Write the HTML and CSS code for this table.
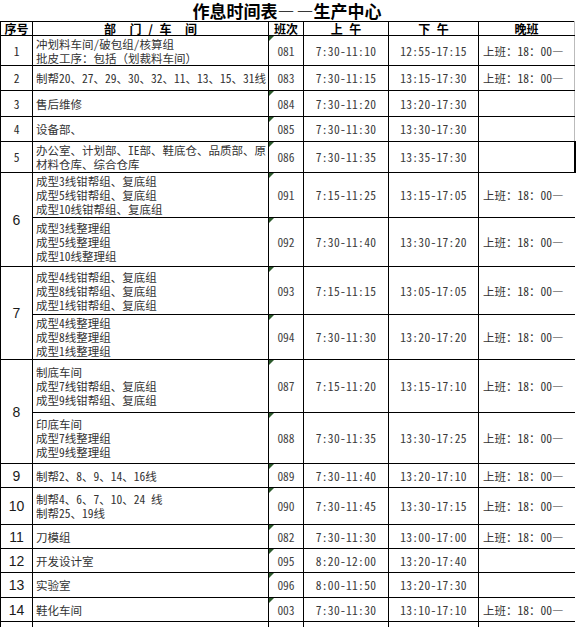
FILE: index.html
```html
<!DOCTYPE html>
<html lang="zh-CN">
<head>
<meta charset="utf-8">
<title>作息时间表——生产中心</title>
<link rel="stylesheet" href="styles.css">
</head>
<body>
<div class="sheet">
  <div class="title">作息时间表<span class="dash">—</span>—生产中心</div>
  <table class="sched">
    <colgroup>
      <col class="c-no"><col class="c-dept"><col class="c-code"><col class="c-am"><col class="c-pm"><col class="c-night">
    </colgroup>
    <thead>
      <tr class="r-head"><th>序号</th><th class="wide">部  门 / 车  间</th><th>班次</th><th class="wide">上 午</th><th class="wide">下 午</th><th class="night-h">晚班</th></tr>
    </thead>
    <tbody>
      <tr class="r30"><td class="no">1</td><td class="dept">冲划料车间/破包组/核算组<br>批皮工序：包括（划裁料车间）</td><td class="code flag">081</td><td class="time">7:30-11:10</td><td class="time">12:55-17:15</td><td class="night edge">上班：18：00—</td></tr>
      <tr class="r25"><td class="no">2</td><td class="dept">制帮20、27、29、30、32、11、13、15、31线</td><td class="code">083</td><td class="time">7:30-11:15</td><td class="time">13:15-17:30</td><td class="night edge">上班：18：00—</td></tr>
      <tr class="r26"><td class="no">3</td><td class="dept">售后维修</td><td class="code flag">084</td><td class="time">7:30-11:20</td><td class="time">13:20-17:30</td><td class="night edge"></td></tr>
      <tr class="r25"><td class="no">4</td><td class="dept">设备部、</td><td class="code flag">085</td><td class="time">7:30-11:30</td><td class="time">13:30-17:30</td><td class="night edge"></td></tr>
      <tr class="r31"><td class="no">5</td><td class="dept">办公室、计划部、IE部、鞋底仓、品质部、原<br>材料仓库、综合仓库</td><td class="code flag">086</td><td class="time">7:30-11:35</td><td class="time">13:35-17:30</td><td class="night mark"></td></tr>
      <tr class="r45"><td class="no big" rowspan="2">6</td><td class="dept">成型3线钳帮组、复底组<br>成型5线钳帮组、复底组<br>成型10线钳帮组、复底组</td><td class="code flag">091</td><td class="time">7:15-11:25</td><td class="time">13:15-17:05</td><td class="night">上班：18：00—</td></tr>
      <tr class="r49"><td class="dept">成型3线整理组<br>成型5线整理组<br>成型10线整理组</td><td class="code flag">092</td><td class="time">7:30-11:40</td><td class="time">13:30-17:20</td><td class="night">上班：18：00—</td></tr>
      <tr class="r48"><td class="no big" rowspan="2">7</td><td class="dept">成型4线钳帮组、复底组<br>成型8线钳帮组、复底组<br>成型1线钳帮组、复底组</td><td class="code flag">093</td><td class="time">7:15-11:15</td><td class="time">13:05-17:05</td><td class="night">上班：18：00—</td></tr>
      <tr class="r45"><td class="dept">成型4线整理组<br>成型8线整理组<br>成型1线整理组</td><td class="code flag">094</td><td class="time">7:30-11:30</td><td class="time">13:20-17:20</td><td class="night">上班：18：00—</td></tr>
      <tr class="r53"><td class="no big" rowspan="2">8</td><td class="dept">制底车间<br>成型7线钳帮组、复底组<br>成型9线钳帮组、复底组</td><td class="code flag">087</td><td class="time">7:15-11:20</td><td class="time">13:15-17:10</td><td class="night">上班：18：00—</td></tr>
      <tr class="r51"><td class="dept">印底车间<br>成型7线整理组<br>成型9线整理组</td><td class="code flag">088</td><td class="time">7:30-11:35</td><td class="time">13:30-17:25</td><td class="night">上班：18：00—</td></tr>
      <tr class="r24"><td class="no big">9</td><td class="dept">制帮2、8、9、14、16线</td><td class="code flag">089</td><td class="time">7:30-11:40</td><td class="time">13:20-17:10</td><td class="night">上班：18：00—</td></tr>
      <tr class="r37"><td class="no big">10</td><td class="dept">制帮4、6、7、10、24 线<br>制帮25、19线</td><td class="code flag">090</td><td class="time">7:30-11:45</td><td class="time">13:30-17:15</td><td class="night">上班：18：00—</td></tr>
      <tr class="r24"><td class="no big">11</td><td class="dept">刀模组</td><td class="code flag">082</td><td class="time">7:30-11:30</td><td class="time">13:00-17:00</td><td class="night">上班：18：00—</td></tr>
      <tr class="r24"><td class="no big">12</td><td class="dept">开发设计室</td><td class="code flag">095</td><td class="time">8:20-12:00</td><td class="time">13:20-17:40</td><td class="night"></td></tr>
      <tr class="r25"><td class="no big">13</td><td class="dept">实验室</td><td class="code flag">096</td><td class="time">8:00-11:50</td><td class="time">13:20-17:30</td><td class="night"></td></tr>
      <tr class="r24"><td class="no big">14</td><td class="dept">鞋化车间</td><td class="code flag">003</td><td class="time">7:30-11:30</td><td class="time">13:10-17:10</td><td class="night">上班：18：00—</td></tr>
      <tr class="r-tail"><td></td><td></td><td></td><td></td><td></td><td class="night"></td></tr>
    </tbody>
  </table>
</div>
</body>
</html>
```

FILE: styles.css
```css
html, body {
  margin: 0;
  padding: 0;
  background: #fff;
}

.sheet {
  width: 579px;
  font-family: "Noto Sans Mono CJK SC", "Noto Sans CJK SC", sans-serif;
  color: #2a2a2a;
}

.title {
  width: 574px;
  height: 21px;
  line-height: 21px;
  text-align: center;
  font-family: "Noto Sans CJK SC", sans-serif;
  font-weight: 700;
  font-size: 17px;
  color: #000;
}

.title .dash {
  letter-spacing: 2px;
}

.sched {
  border-collapse: collapse;
  table-layout: fixed;
  width: 574px;
  font-size: 11.5px;
  line-height: 14px;
}

.c-no { width: 32px; }
.c-dept { width: 236px; }
.c-code { width: 35px; }
.c-am { width: 85px; }
.c-pm { width: 90px; }
.c-night { width: 96px; }

.sched th,
.sched td {
  border: 1px solid #000;
  padding: 0;
  vertical-align: middle;
  white-space: nowrap;
  overflow: hidden;
}

.sched th {
  font-family: "Noto Sans CJK SC", sans-serif;
  font-weight: 700;
  font-size: 12px;
  line-height: 13px;
  color: #000;
  text-align: center;
}

.sched th.wide {
  white-space: pre;
  word-spacing: 4px;
}

.sched th.night-h {
  border-right-color: #bbb;
}

.r-head { height: 14px; }
.r24 { height: 24px; }
.r25 { height: 25px; }
.r26 { height: 26px; }
.r30 { height: 30px; }
.r31 { height: 31px; }
.r37 { height: 37px; }
.r45 { height: 45px; }
.r48 { height: 48px; }
.r49 { height: 49px; }
.r51 { height: 51px; }
.r53 { height: 53px; }
.r-tail { height: 6px; }

.r-tail td {
  border-bottom: none;
}

.no {
  text-align: center;
}

.no.big {
  font-family: "Liberation Sans", sans-serif;
  font-size: 14px;
  color: #1a1a1a;
}

.dept {
  text-align: left;
  padding-left: 3px !important;
  color: #333;
}

.code {
  text-align: center;
  position: relative;
  color: #444;
}

.flag::before {
  content: "";
  position: absolute;
  left: 0;
  top: 0;
  width: 0;
  height: 0;
  border-top: 5px solid #2c5a2c;
  border-right: 5px solid transparent;
}

.time {
  text-align: center;
  letter-spacing: 0.3px;
  color: #3a3a3a;
}

.night {
  text-align: left;
  padding-left: 4px !important;
  border-right: none !important;
  color: #333;
}

.night.edge {
  border-right: 1px solid #bbb !important;
}

.night.mark {
  border-right: 2px solid #000 !important;
}

.r-tail .night {
  border-right: none !important;
}
```
